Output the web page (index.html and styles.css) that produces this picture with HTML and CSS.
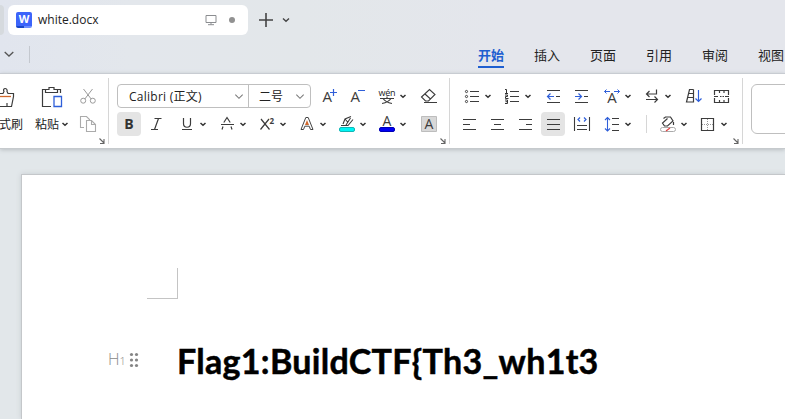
FILE: index.html
```html
<!DOCTYPE html>
<html lang="zh-CN">
<head>
<meta charset="utf-8">
<title>white.docx</title>
<link rel="stylesheet" href="styles.css">
</head>
<body>
<svg class="defs" aria-hidden="true">
  <symbol id="caret" viewBox="0 0 10 24"><path d="M2.500 11l2.500 2.300 2.500-2.300" fill="none" stroke="#333" stroke-width="1.500"/></symbol>
  <symbol id="launch" viewBox="0 0 6 6"><path d="M.5 .5l4 4M5 1v4.500H1" fill="none" stroke="#666" stroke-width="1.100"/></symbol>
  <symbol id="down" viewBox="0 0 10 24"><path d="M1 10.500l4 4 4-4" fill="none" stroke="#777" stroke-width="1.100"/></symbol>
</svg>
<header class="titlebar">
  <div class="prev-tab"></div>
  <div class="doc-tab">
    <span class="logo">W</span>
    <span class="doc-name">white.docx</span>
    <svg class="monitor" viewBox="0 0 12 12"><path d="M1 1.500h10v7H1zM6 8.500v2M3 10.700h6" fill="none" stroke="#8b8d90" stroke-linejoin="round"/></svg>
    <span class="dot"></span>
  </div>
  <svg class="plus" viewBox="0 0 14 14"><path d="M0 7h14M7 0v14" stroke="#444" stroke-width="1.600"/></svg>
  <svg class="tab-caret" viewBox="0 0 8 8"><path d="M1 2.500l3 2.700 3-2.700" fill="none" stroke="#444" stroke-width="1.400"/></svg>
</header>
<nav class="menubar">
  <svg class="quick" viewBox="0 0 10 8"><path d="M.700 2l4.300 4 4.300-4" fill="none" stroke="#555" stroke-width="1.300"/></svg>
  <i class="quick-line"></i>
  <div class="menus">
    <span class="on">开始</span><span>插入</span><span>页面</span><span>引用</span><span>审阅</span><span>视图</span>
  </div>
</nav>
<section class="ribbon">
  <div class="group clip">
    <div class="big brush">
      <svg viewBox="0 84 24 24"><path d="M-1 93.500h4l1-2c-2-4 4-4 3 0l1 2h5.500v3l-2 10H-1M7 106v-3" fill="none" stroke="#3c3c3c" stroke-width="1.200"/><path d="M0 96.500h11" stroke="#d0682c" stroke-width="1.300"/></svg>
      <span>式刷</span>
    </div>
    <div class="big paste">
      <svg viewBox="40 84 24 24"><g fill="none" stroke="#3c3c3c" stroke-width="1.200"><path d="M45 89.500h-2.500v17H51M57.500 89.500h3V93M45.500 92.500v-3H49v-2h5v2h3.500v3z"/></g><path d="M54 96.500h7.500v10H54z" fill="#fff" stroke="#2f5fd9" stroke-width="1.300"/></svg>
      <span>粘贴<svg class="caret"><use href="#caret"/></svg></span>
    </div>
    <div class="stack">
      <svg class="ic" viewBox="76 84 24 24"><g fill="none" stroke="#9a9a9a"><path d="M83.500 89l7.700 10M92.500 89l-7.700 10"/><circle cx="83.200" cy="100.700" r="2.500"/><circle cx="92.800" cy="100.700" r="2.500"/></g></svg>
      <svg class="ic" viewBox="76 112 24 24"><g fill="none" stroke="#ababab" stroke-width="1.100"><path d="M84 127.500h-3.500v-11h6l3 3V121"/><path d="M86.500 120.500h5l4 4v7h-9zM91.500 120.500v4h4"/></g></svg>
    </div>
    <svg class="launch"><use href="#launch"/></svg>
  </div>
  <div class="group font">
    <div class="row">
      <div class="combo"><span class="face">Calibri (正文)</span><svg class="caret"><use href="#down"/></svg><span class="size">二号</span><svg class="caret"><use href="#down"/></svg></div>
      <svg class="ic g7" viewBox="318 84 24 24"><text x="322.500" y="102" class="a">A</text><path d="M330 92.500h7M333.500 89v7" stroke="#2f5fd9" stroke-width="1.200"/></svg>
      <svg class="ic g4" viewBox="346 84 24 24"><text x="350.500" y="102" class="a">A</text><path d="M358 90.500h7" stroke="#2f5fd9" stroke-width="1.200"/></svg>
      <svg class="ic g4" viewBox="374 84 24 24"><text x="378.500" y="96" class="wen" textLength="17">wén</text><path d="M380 98.500h14M387 96.500v2M383 98.500c2 3 4 4 9 5M391 98.500c-2 3-4 4-9 5" fill="none" stroke="#3c3c3c" stroke-width="1.100"/></svg>
      <svg class="caret"><use href="#caret"/></svg>
      <svg class="ic g9" viewBox="417 84 24 24"><path d="M421.500 97l8-7.500 5.500 5-6.500 6.500h-3zM425 94l5.500 5" fill="none" stroke="#3c3c3c" stroke-width="1.100"/><path d="M424 102.500h13" stroke="#3c3c3c"/></svg>
    </div>
    <div class="row">
      <svg class="ic on" viewBox="117 112 24 24"><text x="124.300" y="129" class="bold">B</text></svg>
      <svg class="ic g4" viewBox="145 112 24 24"><path d="M154.500 118.500h7M151 129.500h7M158.500 118.500l-4 11" fill="none" stroke="#3c3c3c" stroke-width="1.200"/></svg>
      <svg class="ic g5" viewBox="174 112 24 24"><path d="M183.500 118v5.500c0 5 7 5 7 0V118M182 129.500h10" fill="none" stroke="#3c3c3c" stroke-width="1.200"/></svg>
      <svg class="caret"><use href="#caret"/></svg>
      <svg class="ic g6" viewBox="214 112 24 24"><path d="M223.800 122.500l3.200-5 3.200 5M221 124.500h13M223 126.500l-1 3M231 126.500l1 3" fill="none" stroke="#3c3c3c" stroke-width="1.200"/></svg>
      <svg class="caret"><use href="#caret"/></svg>
      <svg class="ic g6" viewBox="254 112 24 24"><path d="M261 119l8.500 10.500M269 119l-8.500 10.500" stroke="#3c3c3c" stroke-width="1.200"/><text x="269.500" y="124" class="sup">2</text></svg>
      <svg class="caret"><use href="#caret"/></svg>
      <svg class="ic g6" viewBox="294 112 24 24"><path d="M301 129.500l4.800-12h2.400l4.800 12h-2.500l-1.300-3.300h-4.400l-1.300 3.300z" fill="#fff" stroke="#444"/><path d="M305 125l2-5 2 5z" fill="#d0682c"/></svg>
      <svg class="caret"><use href="#caret"/></svg>
      <svg class="ic g6" viewBox="334 112 24 24"><path d="M341 125.500h7l5-6M343 124l2-5 6-2.500M345 119l3 3.500M346 125l4.500-7" fill="none" stroke="#3c3c3c" stroke-width="1.100"/><rect x="339.500" y="127.500" width="15" height="4" rx="1.500" fill="#00f5f5" stroke="#12b5b5"/></svg>
      <svg class="caret"><use href="#caret"/></svg>
      <svg class="ic g6" viewBox="374 112 24 24"><text x="382.500" y="126" class="a mid">A</text><rect x="379.500" y="127.500" width="15" height="4" rx="1.500" fill="#0000f5" stroke="#0000b5"/></svg>
      <svg class="caret"><use href="#caret"/></svg>
      <svg class="ic g9" viewBox="417 112 24 24"><path d="M421.500 116.500h15v15h-15z" fill="#d8d8d8" stroke="#bdbdbd"/><text x="424.500" y="129" class="a mid">A</text></svg>
    </div>
    <svg class="launch"><use href="#launch"/></svg>
  </div>
  <div class="group para">
    <div class="row">
      <svg class="ic g9" viewBox="459 84 24 24"><g fill="none" stroke="#3c3c3c"><circle cx="466.500" cy="91.500" r="1.100"/><circle cx="466.500" cy="96.500" r="1.100"/><circle cx="466.500" cy="101.500" r="1.100"/><path d="M470 91.500h9M470 96.500h9M470 101.500h9" stroke-width="1.100"/></g></svg>
      <svg class="caret"><use href="#caret"/></svg>
      <svg class="ic g6" viewBox="499 84 24 24"><path d="M505 89.500h1.500V93M505 93.500h3M505 95h2.500v1.500h-2v2h3M505 100h2.500v3.500H505M505.500 101.700h2" fill="none" stroke="#333"/><path d="M510 91.500h9M510 96.500h9M510 101.500h9" stroke="#3c3c3c" stroke-width="1.100"/></svg>
      <svg class="caret"><use href="#caret"/></svg>
      <svg class="ic g8" viewBox="541 84 24 24"><path d="M547 90.500h13M556 96.500h4M547 102.500h13" stroke="#3c3c3c" stroke-width="1.100"/><path d="M554 96.500h-6.500M550.500 93.500l-3 3 3 3" fill="none" stroke="#2f5fd9" stroke-width="1.200"/></svg>
      <svg class="ic g4" viewBox="569 84 24 24"><path d="M575 90.500h13M584 96.500h4M575 102.500h13" stroke="#3c3c3c" stroke-width="1.100"/><path d="M575 96.500h6.500M578.500 93.500l3 3-3 3" fill="none" stroke="#2f5fd9" stroke-width="1.200"/></svg>
      <svg class="ic g6" viewBox="599 84 24 24"><text x="607.200" y="103" class="a">A</text><path d="M610 91.500h-5.500M606.500 89.500l-2 2 2 2M614 91.500h5.500M617.500 89.500l2 2-2 2" fill="none" stroke="#2f5fd9"/></svg>
      <svg class="caret"><use href="#caret"/></svg>
      <svg class="ic g6" viewBox="639 84 24 24"><path d="M656.500 89.500v4.500H647M649.500 91l-3 3 3 3M646 99.500h11M654.500 96.500l3 3-3 3" fill="none" stroke="#3c3c3c" stroke-width="1.200"/></svg>
      <svg class="caret"><use href="#caret"/></svg>
      <svg class="ic g8" viewBox="681 84 24 24"><path d="M693.500 89.500v12.500h-7l3-12.500h4M689 93.500h4.500M688 97.500h5.500" fill="none" stroke="#3c3c3c" stroke-width="1.200"/><path d="M698.500 90v11.500M695.500 98.500l3 3 3-3" fill="none" stroke="#2f5fd9" stroke-width="1.200"/></svg>
      <svg class="ic g4" viewBox="709 84 24 24"><path d="M714.500 95v-4.500h14V95M714.500 98v4.500h14V98M719.500 91v2M724 91v2M719.500 100v2M724 100v2M714 96.500h4M725 96.500h4M720 96.500h1.500M722.500 96.500h1.500" fill="none" stroke="#3c3c3c" stroke-width="1.200"/></svg>
    </div>
    <div class="row">
      <svg class="ic g7" viewBox="457 112 24 24"><path class="ln" d="M463 119.500h13M463 124.500h7M463 129.500h13"/></svg>
      <svg class="ic g4" viewBox="485 112 24 24"><path class="ln" d="M491 119.500h13M494 124.500h7M491 129.500h13"/></svg>
      <svg class="ic g4" viewBox="513 112 24 24"><path class="ln" d="M519 119.500h13M526 124.500h6M519 129.500h13"/></svg>
      <svg class="ic g4 on" viewBox="541 112 24 24"><path class="ln" d="M547 119.500h13M547 124.500h13M547 129.500h13"/></svg>
      <svg class="ic g4" viewBox="569 112 24 24"><path class="ln" d="M574.500 117v14M589.500 117v14M577 125.500h10M577 129.500h10"/><path d="M580 117.500l-2 2 2 2M584 117.500l2 2-2 2" fill="none" stroke="#2f5fd9" stroke-width="1.200"/></svg>
      <svg class="ic g6" viewBox="599 112 24 24"><path d="M607.500 117.500v13.500M605 120l2.500-2.500 2.500 2.500M605 128.500l2.500 2.500 2.500-2.500" fill="none" stroke="#2f5fd9" stroke-width="1.100"/><path class="ln" d="M612 118.500h7M612 124.500h7M612 130.500h7"/></svg>
      <svg class="caret"><use href="#caret"/></svg>
      <i class="sep"></i>
      <svg class="ic g8" viewBox="655 112 24 24"><path d="M663.500 118.500l2-1.500h5l2.500 4-5.500 5h-3l-2-3 5-4.500M673.500 122v3" fill="none" stroke="#3c3c3c" stroke-width="1.200"/><rect x="660.500" y="127.500" width="15" height="4" rx="2" fill="#fff" stroke="#aaa"/><path d="M666 131l4-3" stroke="#e34646" stroke-width="1.300"/></svg>
      <svg class="caret"><use href="#caret"/></svg>
      <svg class="ic g6" viewBox="695 112 24 24"><path d="M707.500 119v11M702 124.500h11" stroke="#999" stroke-dasharray="1 1"/><path d="M701.500 118.500h12v12h-12z" fill="none" stroke="#3c3c3c" stroke-width="1.200"/></svg>
      <svg class="caret"><use href="#caret"/></svg>
    </div>
    <svg class="launch"><use href="#launch"/></svg>
  </div>
  <div class="gallery"></div>
</section>
<main class="workspace">
  <article class="page">
    <div class="corner"></div>
    <div class="heading">
      <span class="level">H<small>1</small></span>
      <svg class="grip" viewBox="0 0 10 16"><g fill="#858585"><circle cx="2.500" cy="2.500" r="1.600"/><circle cx="7.500" cy="2.500" r="1.600"/><circle cx="2.500" cy="8" r="1.600"/><circle cx="7.500" cy="8" r="1.600"/><circle cx="2.500" cy="13.500" r="1.600"/><circle cx="7.500" cy="13.500" r="1.600"/></g></svg>
      <h1>Flag1:BuildCTF{Th3_wh1t3</h1>
    </div>
  </article>
</main>
</body>
</html>
```
FILE: styles.css
```css
* { box-sizing: border-box; }
body {
  margin: 0;
  width: 785px;
  height: 419px;
  overflow: hidden;
  background: linear-gradient(90deg, #e1e5ee 0, #e3e7ec 130px, #e3e7ea 300px, #e4e6ec 500px);
  font-family: "Open Sans", "Noto Sans CJK SC", sans-serif;
  font-size: 12px;
  color: #222;
}
svg { display: block; flex: none; }
.defs { display: none; }

.titlebar { display: flex; align-items: center; height: 40px; }
.prev-tab { width: 4px; height: 30px; background: #d6dade; border-radius: 0 5px 5px 0; }
.doc-tab {
  display: flex;
  align-items: center;
  width: 240px;
  height: 30px;
  margin-left: 4px;
  padding-left: 8px;
  background: #fff;
  border-radius: 6px;
}
.logo {
  width: 16px;
  height: 16px;
  border-radius: 2px;
  background: linear-gradient(90deg, #1746c8 50%, #6b8dff 50%) bottom / 100% 2px no-repeat #3c64fa;
  color: #fff;
  font: bold 11px/14px "Open Sans", sans-serif;
  text-align: center;
}
.doc-name { width: 167px; margin-left: 6px; line-height: 18px; }
.monitor { width: 12px; height: 12px; }
.dot { width: 6px; height: 6px; margin-left: 12px; border-radius: 50%; background: #919191; }
.plus { width: 14px; height: 14px; margin-left: 11px; }
.tab-caret { width: 8px; height: 8px; margin-left: 9px; }

.menubar { display: flex; height: 33px; }
.quick { width: 10px; height: 8px; margin: 10px 0 0 4px; }
.quick-line { width: 1px; height: 17px; margin: 6px 0 0 15px; background: #c4c8cf; }
.menus { display: flex; gap: 30px; margin-left: 448px; font-size: 13px; }
.menus span { flex: none; width: 26px; height: 28px; line-height: 30px; white-space: nowrap; }
.menus .on { color: #1f5fd0; font-weight: bold; border-bottom: 2px solid #1f5fd0; }

.ribbon {
  display: flex;
  position: relative;
  height: 76px;
  padding-top: 4px;
  background: #fff;
  border-top: 1px solid #c8ccd2;
  border-bottom: 1px solid #c6cacd;
  box-shadow: 0 1px 4px #b9bec2;
}
.group { position: relative; flex: none; height: 66px; border-right: 1px solid #d6d6d6; padding-top: 6px; }
.group .launch { position: absolute; right: 3px; bottom: 0; width: 6px; height: 6px; }
.clip { display: flex; width: 109px; }
.font { width: 341px; }
.para { width: 293px; }
.row { display: flex; height: 24px; margin-bottom: 4px; }
.ic { width: 24px; height: 24px; border-radius: 4px; }
.ic.on { background: #e4e4e4; }
.caret { width: 10px; height: 24px; }
.g4 { margin-left: 4px; }
.g5 { margin-left: 5px; }
.g6 { margin-left: 6px; }
.g7 { margin-left: 7px; }
.g8 { margin-left: 8px; }
.g9 { margin-left: 9px; }
.font .row { padding-left: 8px; }
.big > svg { width: 24px; height: 24px; }
.big span { display: flex; height: 24px; margin-top: 4px; line-height: 25px; white-space: nowrap; }
.brush { width: 35px; }
.brush span { margin-left: -1px; }
.paste { width: 41px; }
.paste > svg { margin-left: 5px; }
.paste .caret { margin-left: 1px; }
.stack { display: grid; gap: 4px; align-content: start; }
.combo {
  display: flex;
  width: 194px;
  height: 24px;
  border: 1px solid #bfbfbf;
  border-radius: 4px;
  line-height: 24px;
}
.combo .caret { height: 22px; }
.face { width: 105px; margin-left: 11px; letter-spacing: 0.25px; white-space: nowrap; }
.size { width: 47px; height: 22px; margin-left: 4px; padding-left: 10px; border-left: 1px solid #bfbfbf; }
.a { font: 15px "Open Sans", sans-serif; fill: #3c3c3c; }
.mid { font-size: 14px; }
.wen { font: 9px "Open Sans", sans-serif; fill: #222; }
.bold { font: bold 14px "Open Sans", sans-serif; fill: #333; }
.sup { font: bold 8px "Open Sans", sans-serif; fill: #3c3c3c; }
.ln { fill: none; stroke: #3c3c3c; stroke-width: 1.1; }
.sep { width: 1px; height: 18px; margin: 3px 0 0 13px; background: #d6d6d6; }
.gallery { flex: none; width: 60px; height: 50px; margin: 6px 0 0 8px; border: 1px solid #bfbfbf; border-radius: 6px; }

.workspace { height: 270px; padding: 25px 0 0 21px; background: #e2e7ea; }
.page {
  width: 764px;
  height: 245px;
  background: #fff;
  border: solid #c4c7ca;
  border-width: 1px 0 0 1px;
  box-shadow: 0 0 5px #c8cdd1;
}
.corner { width: 31px; height: 31px; margin: 93px 0 0 125px; border: solid #c4c4c4; border-width: 0 1px 1px 0; }
.heading { display: flex; align-items: center; height: 50px; margin-top: 36px; padding-left: 86px; }
.level { width: 21px; font-size: 16px; font-weight: 300; color: #888; line-height: 20px; }
.level small { font-size: 11px; }
.grip { width: 10px; height: 16px; }
h1 {
  margin: 2px 0 0 38px;
  color: #000;
  font: bold 34px/50px Lato, sans-serif;
  letter-spacing: 0.3px;
  -webkit-text-stroke: 0.5px #000;
  white-space: nowrap;
}
```
